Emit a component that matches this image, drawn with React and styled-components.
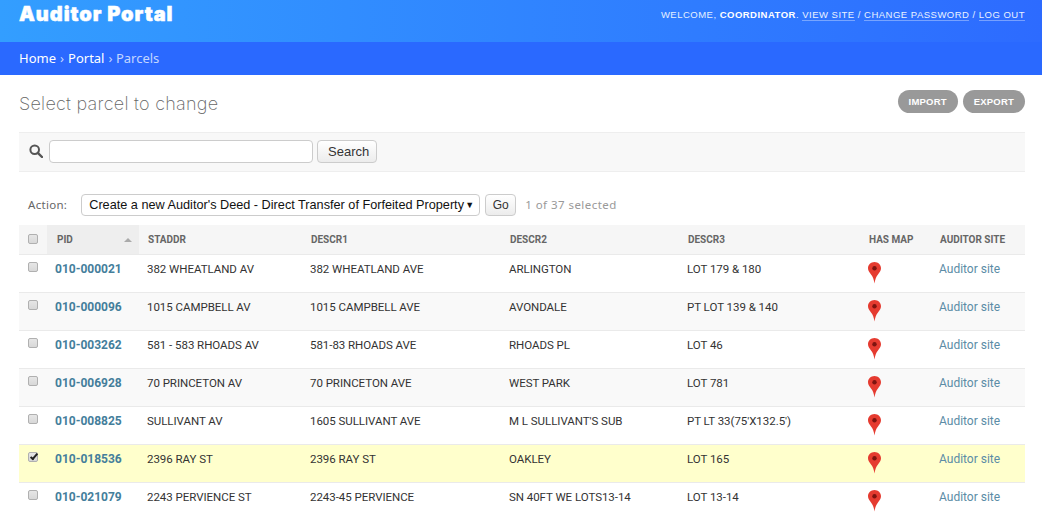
import React from "react";
import styled, { createGlobalStyle } from "styled-components";

const Global = createGlobalStyle`
  html, body { margin: 0; padding: 0; background: #fff; }
  body { font-family: Roboto, "Liberation Sans", sans-serif; font-size: 12px; color: #333; overflow: hidden; height: 520px; }
`;
const Page = styled.div`width: 1042px; height: 520px; overflow: hidden;`;
const Header = styled.header`
  height: 42px; box-sizing: border-box; padding: 0 17px 0 19px;
  display: flex; justify-content: space-between; align-items: flex-start;
  background: linear-gradient(90deg, #339eff 0%, #2d6bff 100%);
`;
const Brand = styled.h1`
  margin: 1px 0 0; font: 900 20px/26px Inter, "Liberation Sans", sans-serif; color: #fff; letter-spacing: 0.95px;
  -webkit-text-stroke: 0.5px #fff;
`;
const UserTools = styled.div`
  margin-top: 9px; font: 400 9.5px/12px "Liberation Sans", sans-serif; letter-spacing: 0.49px; color: #e4f0ff; text-transform: uppercase;
  strong { font-weight: 700; color: #fff; }
  a { color: #eaf2ff; border-bottom: 1px solid rgba(255,255,255,.35); }
`;
const Crumbs = styled.nav`
  height: 33px; box-sizing: border-box; padding: 0 19px; display: flex; align-items: center; gap: 4px;
  background: #2a69ff; color: #c3d6ff; font: 400 13px/17px "Noto Sans", "Open Sans", sans-serif;
  a { color: #fff; }
`;
const Content = styled.main`padding: 0 17px 0 19px;`;
const TitleRow = styled.div`display: flex; justify-content: space-between; height: 57px; align-items: flex-start;`;
const Title = styled.h2`margin: 17px 0 0; font: 200 18px/24px Inter, "Open Sans", sans-serif; color: #666; letter-spacing: 0.26px;`;
const Tools = styled.div`display: flex; gap: 5px; margin-top: 15px;`;
const Tool = styled.a`
  height: 23px; box-sizing: border-box; padding: 0 11px; border-radius: 12px; background: #999; color: #fff;
  font: 700 9.5px/23px "Liberation Sans", sans-serif; letter-spacing: 0.2px; display: block;
`;
const SearchBar = styled.div`
  height: 40px; box-sizing: border-box; background: #f8f8f8; border-top: 1px solid #eee; border-bottom: 1px solid #eee;
  display: flex; align-items: center; padding: 0 0 2px 10px;
  svg { display: block; }
`;
const SearchInput = styled.input`
  width: 264px; height: 23px; box-sizing: border-box; margin: 0 4px 0 6px; border: 1px solid #ccc; border-radius: 4px; background: #fff; padding: 0 4px;
`;
const Button = styled.button`
  height: 23px; box-sizing: border-box; margin: 0; border: 1px solid #ccc; border-radius: 4px;
  background: linear-gradient(#fff, #ececec); color: #333; font: 400 13px/1 "Liberation Sans", sans-serif; padding: 0 10px; width: 60px;
`;
const Actions = styled.div`
  height: 41px; box-sizing: border-box; padding: 0 0 0 9px; display: flex; align-items: center; margin-top: 12px;
`;
const ActionLabel = styled.label`font: 400 11.5px/16px "Noto Sans", "Open Sans", sans-serif; color: #666; letter-spacing: .3px; margin-right: 14px;`;
const Select = styled.div`
  width: 399px; height: 22px; box-sizing: border-box; border: 1px solid #ccc; border-radius: 4px; background: #fff; color: #111;
  font: 400 12.7px/20px "Liberation Sans", sans-serif; padding: 0 0 0 7px; white-space: nowrap; position: relative;
  &::after { content: "▼"; position: absolute; right: 5px; top: 0; font-size: 9px; color: #111; }
`;
const GoButton = styled(Button)`margin-left: 5px; height: 22px; width: 31px; padding: 0; font-size: 12px;`;
const Counter = styled.span`margin-left: 9px; font: 400 11.5px/16px "Noto Sans", "Open Sans", sans-serif; color: #999; letter-spacing: .45px;`;
const Table = styled.table`width: 1006px; border-collapse: collapse; table-layout: fixed;`;
const Th = styled.th`
  height: 29px; box-sizing: border-box; padding: 2px 0 0 9px; text-align: left; font: 700 10px/14px Roboto, sans-serif; color: #666;
  background: ${p => p.$sorted ? "#eeeeee" : "#f6f6f6"}; border-bottom: 1px solid #eaeaea; position: relative; vertical-align: middle;
`;
const SortMark = styled.span`
  position: absolute; right: 7px; top: 13px; width: 0; height: 0; border: 4px solid transparent; border-top: 0; border-bottom: 4px solid #aaa;
`;
const Row = styled.tr`
  background: ${p => p.$selected ? "#ffffcc" : p.$alt ? "#f9f9f9" : "#fff"};
`;
const Td = styled.td`
  height: 38px; box-sizing: border-box; padding: 7px 0 0 8px; vertical-align: top; font: 400 11.5px/15px Roboto, sans-serif; letter-spacing: -0.04px; color: #333;
  border-bottom: 1px solid #eaeaea; white-space: nowrap; overflow: visible;
`;
const CheckCell = styled(Td)`padding: 7px 0 0 9px;`;
const HeadCheckCell = styled(Th)`padding: 0 0 0 9px;`;
const Box = styled.input.attrs({ type: "checkbox" })`
  appearance: none; display: block; width: 8px; height: 8px; box-sizing: content-box; margin: 0; position: relative;
  border: 1px solid #b0b0b0; border-radius: 2px; background: linear-gradient(#e6e6e6, #d8d8d8);
  &:checked::after { content: ""; position: absolute; left: 2.5px; top: -0.5px; width: 2px; height: 6px; border: solid #222; border-width: 0 2px 2px 0; transform: rotate(40deg); }
`;
const PidLink = styled.a`font: 700 12px/15px Roboto, sans-serif; color: #447e9b; letter-spacing: 0;`;
const SiteLink = styled.a`color: #5b8ca6; font-size: 12px; letter-spacing: 0;`;
const PinCell = styled(Td)`padding: 6px 0 0 7px;`;

const Pin = () => (
  <svg width="15" height="23" viewBox="0 0 15 23" style={{ display: "block" }}>
    <path d="M7.500 1C3.900 1 1 3.800 1 7.300c0 2.500 1.500 4.200 3.200 6.400C5.700 15.700 6.900 18.200 7.500 22.500c.6-4.300 1.800-6.800 3.300-8.800C12.500 11.500 14 9.800 14 7.300 14 3.800 11.100 1 7.500 1z" fill="#e53b30" />
    <circle cx="7.500" cy="7.300" r="2.200" fill="#7d1410" />
  </svg>
);
const Search = () => (
  <svg width="14" height="14" viewBox="0 0 14 14"><circle cx="5.700" cy="5.700" r="4.300" fill="none" stroke="#555" strokeWidth="2" /><path d="M8.800 8.800L13 13" stroke="#555" strokeWidth="2.400" strokeLinecap="round" /></svg>
);

const rows = [
  ["010-000021", "382 WHEATLAND AV", "382 WHEATLAND AVE", "ARLINGTON", "LOT 179 & 180"],
  ["010-000096", "1015 CAMPBELL AV", "1015 CAMPBELL AVE", "AVONDALE", "PT LOT 139 & 140"],
  ["010-003262", "581 - 583 RHOADS AV", "581-83 RHOADS AVE", "RHOADS PL", "LOT 46"],
  ["010-006928", "70 PRINCETON AV", "70 PRINCETON AVE", "WEST PARK", "LOT 781"],
  ["010-008825", "SULLIVANT AV", "1605 SULLIVANT AVE", "M L SULLIVANT'S SUB", "PT LT 33(75'X132.5')"],
  ["010-018536", "2396 RAY ST", "2396 RAY ST", "OAKLEY", "LOT 165"],
  ["010-021079", "2243 PERVIENCE ST", "2243-45 PERVIENCE", "SN 40FT WE LOTS13-14", "LOT 13-14"],
];
const widths = [28, 92, 163, 199, 178, 181, 71, 94];

export default function App() {
  return (
    <Page>
      <Global />
      <Header>
        <Brand>Auditor Portal</Brand>
        <UserTools>Welcome, <strong>Coordinator</strong>. <a>View site</a> / <a>Change password</a> / <a>Log out</a></UserTools>
      </Header>
      <Crumbs><a>Home</a> › <a>Portal</a> › Parcels</Crumbs>
      <Content>
        <TitleRow>
          <Title>Select parcel to change</Title>
          <Tools><Tool>IMPORT</Tool><Tool>EXPORT</Tool></Tools>
        </TitleRow>
        <SearchBar>
          <Search />
          <SearchInput />
          <Button>Search</Button>
        </SearchBar>
        <Actions>
          <ActionLabel>Action:</ActionLabel>
          <Select>Create a new Auditor's Deed - Direct Transfer of Forfeited Property</Select>
          <GoButton>Go</GoButton>
          <Counter>1 of 37 selected</Counter>
        </Actions>
        <Table>
          <colgroup>{widths.map((w, i) => <col key={i} style={{ width: w }} />)}</colgroup>
          <thead>
            <tr>
              <HeadCheckCell><Box readOnly /></HeadCheckCell>
              <Th $sorted style={{ paddingLeft: 10 }}>PID<SortMark /></Th>
              <Th>STADDR</Th><Th>DESCR1</Th><Th>DESCR2</Th><Th>DESCR3</Th><Th>HAS MAP</Th><Th>AUDITOR SITE</Th>
            </tr>
          </thead>
          <tbody>
            {rows.map((r, i) => (
              <Row key={r[0]} $alt={i % 2 === 1} $selected={i === 5}>
                <CheckCell><Box readOnly checked={i === 5} /></CheckCell>
                <Td><PidLink>{r[0]}</PidLink></Td>
                <Td>{r[1]}</Td><Td>{r[2]}</Td><Td>{r[3]}</Td><Td>{r[4]}</Td>
                <PinCell><Pin /></PinCell>
                <Td><SiteLink>Auditor site</SiteLink></Td>
              </Row>
            ))}
          </tbody>
        </Table>
      </Content>
    </Page>
  );
}
